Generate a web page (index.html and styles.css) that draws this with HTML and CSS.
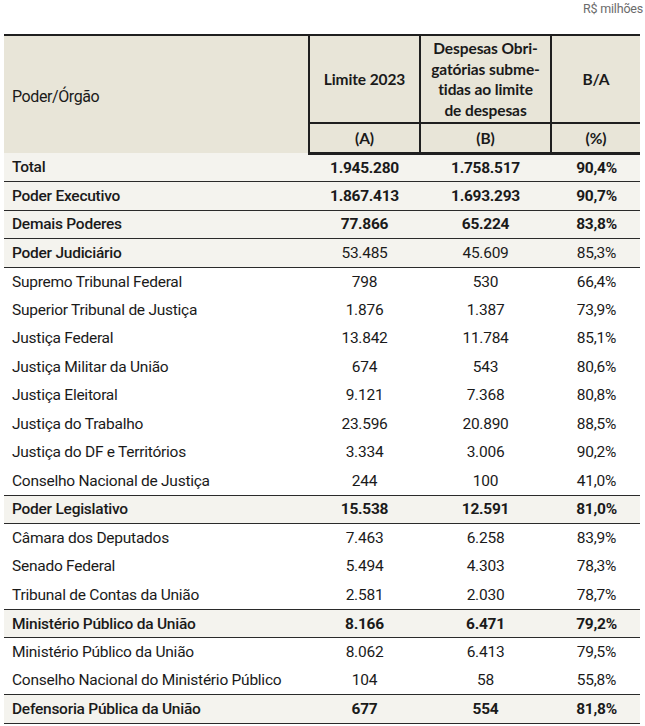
FILE: index.html
```html
<!DOCTYPE html>
<html lang="pt-BR">
<head>
<meta charset="utf-8">
<title>Limite de despesas</title>
<link rel="stylesheet" href="styles.css">
</head>
<body>
<div class="page">
  <div class="unit">R$ milhões</div>
  <table class="tbl">
    <colgroup>
      <col class="c1"><col class="c2"><col class="c3"><col class="c4">
    </colgroup>
    <thead>
      <tr class="h1">
        <th class="label" rowspan="2">Poder/Órgão</th>
        <th class="hcol">Limite 2023</th>
        <th class="hcol">Despesas Obri-<br>gatórias subme-<br>tidas ao limite<br>de despesas</th>
        <th class="hcol last">B/A</th>
      </tr>
      <tr class="h2">
        <th class="hcol">(A)</th>
        <th class="hcol">(B)</th>
        <th class="hcol last">(%)</th>
      </tr>
    </thead>
    <tbody>
      <tr class="grp bold"><td>Total</td><td>1.945.280</td><td>1.758.517</td><td>90,4%</td></tr>
      <tr class="grp bold"><td>Poder Executivo</td><td>1.867.413</td><td>1.693.293</td><td>90,7%</td></tr>
      <tr class="grp bold"><td>Demais Poderes</td><td>77.866</td><td>65.224</td><td>83,8%</td></tr>
      <tr class="grp"><td>Poder Judiciário</td><td>53.485</td><td>45.609</td><td>85,3%</td></tr>
      <tr><td>Supremo Tribunal Federal</td><td>798</td><td>530</td><td>66,4%</td></tr>
      <tr><td>Superior Tribunal de Justiça</td><td>1.876</td><td>1.387</td><td>73,9%</td></tr>
      <tr><td>Justiça Federal</td><td>13.842</td><td>11.784</td><td>85,1%</td></tr>
      <tr><td>Justiça Militar da União</td><td>674</td><td>543</td><td>80,6%</td></tr>
      <tr><td>Justiça Eleitoral</td><td>9.121</td><td>7.368</td><td>80,8%</td></tr>
      <tr><td>Justiça do Trabalho</td><td>23.596</td><td>20.890</td><td>88,5%</td></tr>
      <tr><td>Justiça do DF e Territórios</td><td>3.334</td><td>3.006</td><td>90,2%</td></tr>
      <tr class="before-grp"><td>Conselho Nacional de Justiça</td><td>244</td><td>100</td><td>41,0%</td></tr>
      <tr class="grp bold"><td>Poder Legislativo</td><td>15.538</td><td>12.591</td><td>81,0%</td></tr>
      <tr><td>Câmara dos Deputados</td><td>7.463</td><td>6.258</td><td>83,9%</td></tr>
      <tr><td>Senado Federal</td><td>5.494</td><td>4.303</td><td>78,3%</td></tr>
      <tr class="before-grp"><td>Tribunal de Contas da União</td><td>2.581</td><td>2.030</td><td>78,7%</td></tr>
      <tr class="grp bold"><td>Ministério Público da União</td><td>8.166</td><td>6.471</td><td>79,2%</td></tr>
      <tr><td>Ministério Público da União</td><td>8.062</td><td>6.413</td><td>79,5%</td></tr>
      <tr class="before-grp"><td>Conselho Nacional do Ministério Público</td><td>104</td><td>58</td><td>55,8%</td></tr>
      <tr class="grp bold"><td>Defensoria Pública da União</td><td>677</td><td>554</td><td>81,8%</td></tr>
    </tbody>
  </table>
</div>
</body>
</html>
```

FILE: styles.css
```css
* { box-sizing: border-box; }
html, body { margin: 0; padding: 0; background: #ffffff; }
body {
  font-family: Roboto, "Liberation Sans", sans-serif;
  color: #1a1a1a;
}
.page {
  padding: 2px 2px 0 4px;
  display: flex;
  flex-direction: column;
}
.unit {
  align-self: flex-end;
  font-size: 12.5px;
  letter-spacing: -0.2px;
  color: #6b6b6b;
  line-height: 14px;
  margin-bottom: 18px;
}
.tbl {
  width: 636px;
  border-collapse: collapse;
  table-layout: fixed;
}
.c1 { width: 305px; }
.c2 { width: 111px; }
.c3 { width: 131px; }
.c4 { width: 89px; }

thead th {
  background: #e8e5d8;
  padding: 0;
}
.h1 th { border-top: 2px solid #1f1f1f; height: 88px; }
.h2 th { height: 30px; border-bottom: 3px solid #1f1f1f; }
th.label {
  text-align: left;
  font-weight: 400;
  font-size: 16px;
  letter-spacing: -0.4px;
  padding-left: 8px;
  padding-top: 4px;
  border-right: 2px solid #1f1f1f;
}
th.hcol {
  font-family: Lato, "Open Sans", sans-serif;
  font-weight: 700;
  font-size: 15.5px;
  letter-spacing: -0.1px;
  line-height: 20.5px;
  text-align: center;
  border-right: 2px solid #1f1f1f;
}
th.last { border-right: none; }
.h1 th.hcol { border-bottom: 2px solid #1f1f1f; }

tbody td {
  height: 28.53px;
  padding: 0;
  font-size: 15.5px;
  font-weight: 400;
  letter-spacing: -0.25px;
  text-align: center;
  white-space: nowrap;
}
tbody td:first-child {
  text-align: left;
  padding-left: 8px;
}
tbody td:last-child { padding-left: 2px; }
tr.grp td {
  background: #f4f3ee;
  border-bottom: 1px solid #2a2a2a;
}
tr.grp td:first-child { font-weight: 500; }
tr.bold td { font-weight: 700; }
tr.bold td:first-child { font-weight: 500; }
tr.before-grp td { border-bottom: 1px solid #2a2a2a; }
```
